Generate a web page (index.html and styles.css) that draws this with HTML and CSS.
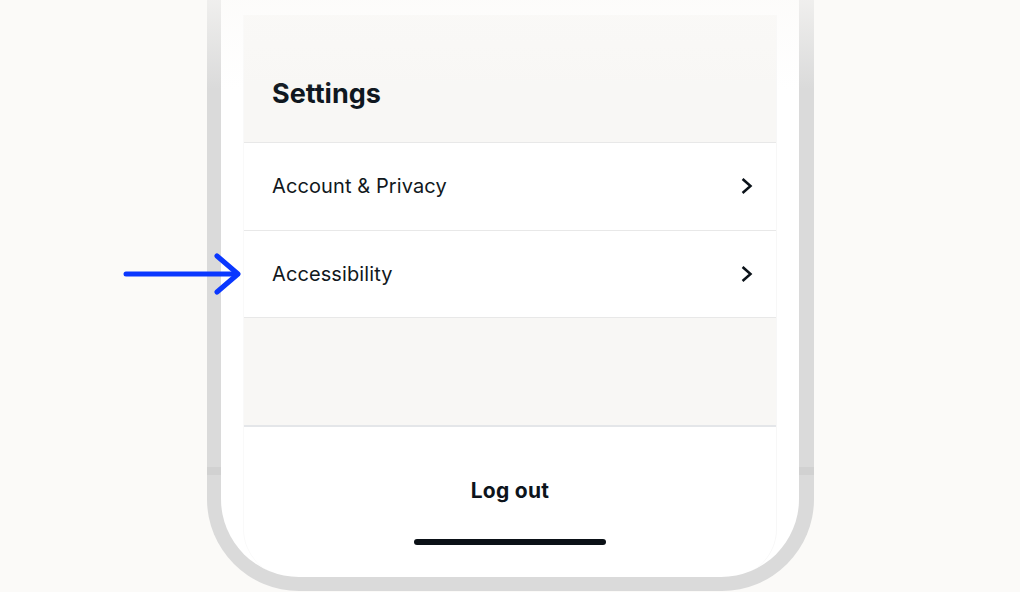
FILE: index.html
```html
<!DOCTYPE html>
<html lang="en">
<head>
<meta charset="utf-8">
<title>Settings</title>
<link rel="stylesheet" href="styles.css">
</head>
<body>
<div class="stage">
  <div class="frame">
    <div class="screen">
      <div class="panel">
        <div class="header"><h1 class="title">Settings</h1></div>
        <div class="row">
          <span class="label">Account &amp; Privacy</span>
          <svg class="chev" width="12" height="16" viewBox="0 0 12 16"><polyline points="2.5,1.8 9.5,8 2.5,14.2" fill="none" stroke="#0b1219" stroke-width="2.5" stroke-linejoin="miter" stroke-linecap="square"/></svg>
        </div>
        <div class="row">
          <span class="label">Accessibility</span>
          <svg class="chev" width="12" height="16" viewBox="0 0 12 16"><polyline points="2.5,1.8 9.5,8 2.5,14.2" fill="none" stroke="#0b1219" stroke-width="2.5" stroke-linejoin="miter" stroke-linecap="square"/></svg>
        </div>
        <div class="spacer"></div>
        <div class="footer">
          <div class="logout">Log out</div>
          <div class="home"></div>
        </div>
      </div>
    </div>
  </div>
  <div class="fade"></div>
  <svg class="arrow" width="125" height="50" viewBox="0 0 125 50"><g fill="none" stroke="#0a37ff" stroke-width="5" stroke-linecap="round" stroke-linejoin="round"><line x1="6" y1="24" x2="115" y2="24"/><polyline points="97,6 118,24 97,42"/></g></svg>
</div>
</body>
</html>
```
FILE: styles.css
```css
html, body {
  margin: 0;
  padding: 0;
}
body {
  background: #fbfaf8;
  font-family: "Inter", "Liberation Sans", sans-serif;
  color: #0d141b;
  overflow: hidden;
}
.stage {
  position: relative;
  width: 1020px;
  height: 592px;
  overflow: hidden;
}
.frame {
  width: 578px;
  margin: -40px 0 0 207px;
  padding: 0 15px 14px 14px;
  height: 617px;
  border-radius: 0 0 92px 92px;
  background: linear-gradient(to bottom, #dadada 0, #dadada 507px, #d1d1d1 507px, #d1d1d1 515px, #dadada 515px);
}
.screen {
  height: 617px;
  background: #ffffff;
  border-radius: 0 0 78px 78px;
  padding: 55px 22px 0 23px;
  box-sizing: border-box;
  overflow: hidden;
}
.panel {
  height: 100%;
  display: flex;
  flex-direction: column;
  border-right: 1px solid #f7f7f7;
  border-left: 1px solid #f9f9f9;
  border-radius: 0 0 48px 48px;
  margin-left: -1px;
}
.header {
  height: 128px;
  background: #f8f7f5;
  border-bottom: 1px solid #e8e8e8;
  box-sizing: border-box;
  display: flex;
  align-items: center;
  padding: 0 28px;
  flex: none;
}
.title {
  margin: 30px 0 0 0;
  font-size: 27px;
  font-weight: 700;
  letter-spacing: 0;
  color: #0f1720;
}
.row {
  height: 87.5px;
  box-sizing: border-box;
  border-bottom: 1px solid #e8e8e8;
  display: flex;
  align-items: center;
  justify-content: space-between;
  padding: 0 23px 0 28px;
  background: #ffffff;
  flex: none;
}
.label {
  font-size: 20px;
  font-weight: 400;
  letter-spacing: 0.1px;
  color: #111820;
}
.chev {
  display: block;
}
.spacer {
  height: 107px;
  background: #f8f7f5;
  border-bottom: 2px solid #e4e6e9;
  flex: none;
}
.footer {
  flex: 1;
  display: flex;
  flex-direction: column;
  align-items: center;
}
.logout {
  margin-top: 52px;
  font-size: 21px;
  font-weight: 700;
  letter-spacing: 0.3px;
  color: #0d141b;
  line-height: 24px;
}
.home {
  margin-top: 36px;
  width: 192px;
  height: 6px;
  border-radius: 3px;
  background: #0b1117;
}
.fade {
  position: absolute;
  left: 0;
  top: 0;
  width: 100%;
  height: 90px;
  background: linear-gradient(to bottom, rgba(251,250,248,0.65), rgba(251,250,248,0));
  pointer-events: none;
}
.arrow {
  position: absolute;
  left: 120px;
  top: 250px;
}
```
